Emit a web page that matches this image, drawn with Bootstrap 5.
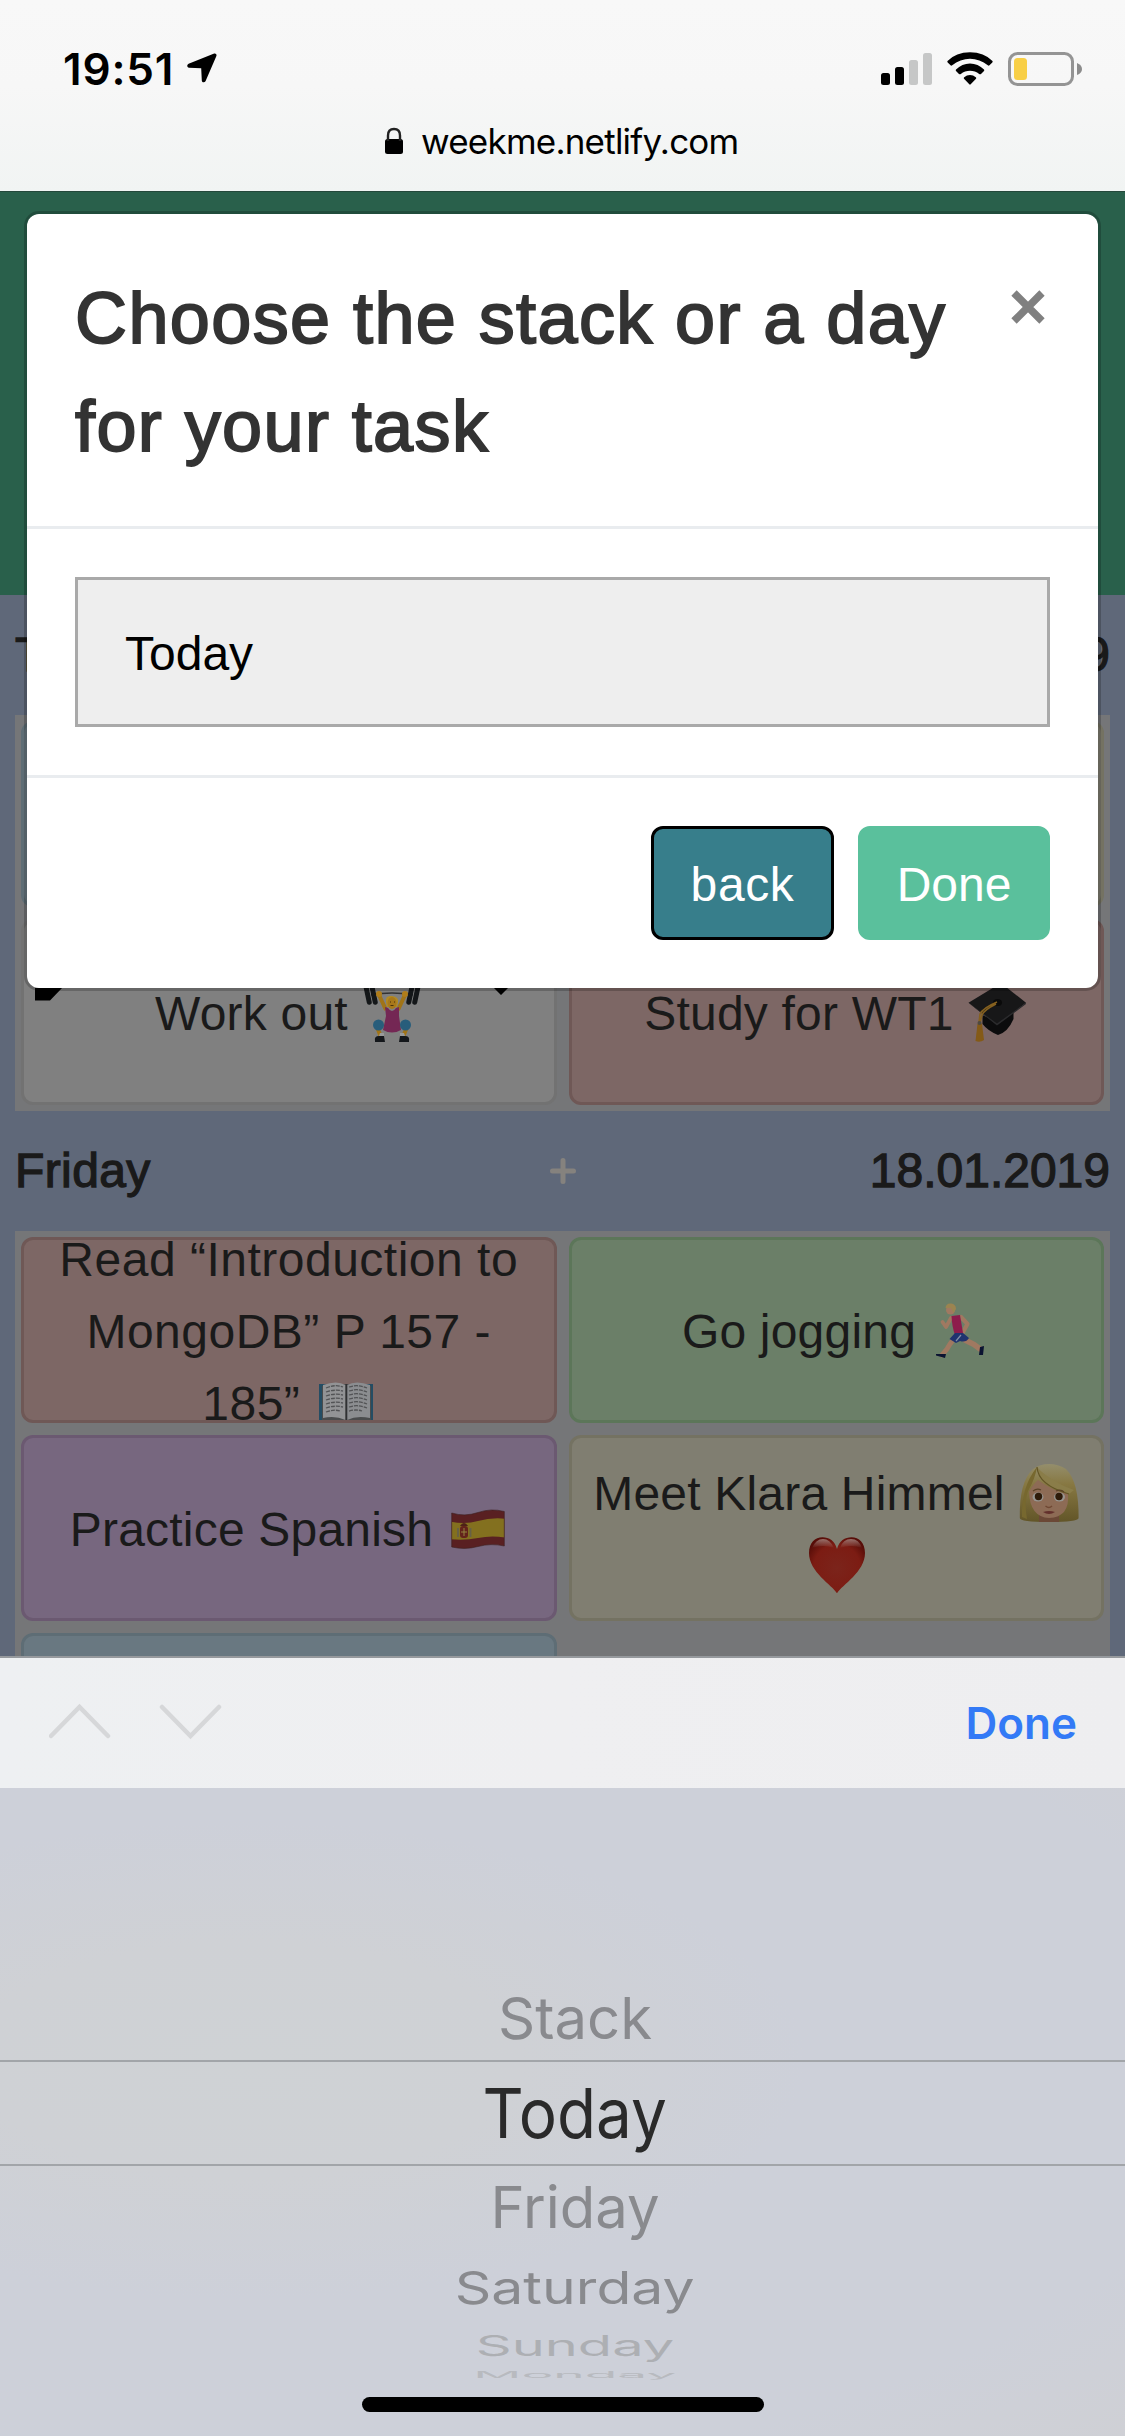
<!DOCTYPE html>
<html lang="en">
<head>
<meta charset="utf-8">
<meta name="viewport" content="width=device-width, initial-scale=1">
<title>weekme</title>
<link href="https://cdn.jsdelivr.net/npm/bootstrap@5.3.0/dist/css/bootstrap.min.css" rel="stylesheet">
<style>
  body { width:1125px; height:2436px; overflow:hidden; font-family:"Liberation Sans",Arial,sans-serif; font-size:48px; line-height:72px; color:#1a1a1a; }
  .ios { font-family:Inter,"Liberation Sans",sans-serif; color:#000; }
  .safari-top { height:192px; background:linear-gradient(#f8f8f8 0,#f7f7f7 45%,#f1f4f3 100%); border-bottom:1px solid #24483b; }
  .status-row { height:100px; padding:37px 43px 0 63px; line-height:64px; }
  .clock { font-size:44px; font-weight:600; letter-spacing:.85px; }
  .loc { margin:16px 0 0 13px; }
  .signals { margin-top:14px; }
  .url-row { padding-top:14px; padding-left:384px; line-height:54px; font-size:35px; letter-spacing:-.78px; }
  .url-row svg { margin-right:17px; margin-top:-1px; }
  .webview { height:1464px; background:#5f6879; }
  .hero { height:403px; background:#29604b; }
  .day-head { height:120px; padding:0 15px; }
  .mid { font-weight:400; -webkit-text-stroke:1.3px currentColor; }
  .day-head > .mid { flex:1 1 0; }
  .day-name { letter-spacing:.4px; }
  .tasks { margin:0 15px; padding:0; background:#757678; }
  .tasks > div { padding:6px; }
  .task { height:186px; border:3px solid; border-radius:12px; overflow:hidden; padding:3px 18px 0; text-align:center; letter-spacing:.2px; }
  .task svg { width:60px; height:60px; vertical-align:-12px; margin-left:1px; }
  .spaced { letter-spacing:.5px; }
  .t-blue { background:#697881; border-color:#5e6d75; }
  .t-sand { background:#807e71; border-color:#747262; }
  .t-grey { background:#808080; border-color:#727272; }
  .t-pink { background:#7d6765; border-color:#6f5856; }
  .t-green { background:#6b7f68; border-color:#5c7659; }
  .t-plum { background:#77677f; border-color:#6b5971; }
  .dlg { top:19px; left:24px; width:1077px; border:3px solid rgba(0,0,0,.2); border-radius:15px; background:#fff; background-clip:padding-box; }
  .dlg-head { padding:50px 48px 46px; height:315px; border-bottom:3px solid #e9ecef; color:#333; }
  .dlg-title { font-size:72px; line-height:108px; letter-spacing:1.4px; -webkit-text-stroke-width:1.9px; margin:0; white-space:nowrap; }
  .dlg-close { margin:25px 4px 0 0; }
  .dlg-body { padding:48px; height:249px; border-bottom:3px solid #e9ecef; }
  .day-select { height:150px; border:3px solid #a9a9a9; background:#eee; color:#000; padding:3px 0 0 47px; }
  .dlg-foot { padding:48px; height:210px; gap:24px; }
  .bt { height:114px; border-radius:12px; color:#fff; border:3px solid; padding:3px 0 0; }
  .bt-back { width:183px; background:#377e8b; border-color:#000; letter-spacing:.6px; }
  .bt-done { width:192px; background:#5ac09c; border-color:#5ac09c; }
  .cut { top:796px; left:35px; }
  .kb-bar { height:132px; background:linear-gradient(90deg,#eef0f2,#efeff1 50%,#eeeef0); border-top:2px solid #96999d; padding:0 48px; }
  .kb-bar svg { margin:-6px 0 0 1px; }
  .kb-done { font-size:44px; font-weight:600; color:#337af6; letter-spacing:0; }
  .kb-wheel { height:648px; background:radial-gradient(ellipse at 22% 42%,#cfd2d5 0,#cfd1d5 22%,#cdd0d9 45%,#cdd0d9 80%,#cfd0d5 100%); padding-top:189px; padding-left:25px; }
  .wheel-row { white-space:nowrap; color:#898a8e; height:83px; line-height:83px; font-size:58px; }
  .wheel-row span { display:inline-block; }
  .wheel-sel { height:106px; line-height:103px; font-size:69px; border-top:2px solid #a2a5a9; border-bottom:2px solid #a2a5a9; color:#2a2a2a; margin-left:-25px; padding-left:25px; }
  .wheel-sel span { transform:scale(.925,1); }
  .turn-1 { height:76px; line-height:78px; font-size:56px; }
  .turn-1 span { transform:scale(1.02,.8); }
  .turn-2 { height:42px; line-height:42px; font-size:56px; color:#adafb3; }
  .turn-2 span { transform:scale(1,.5); }
  .turn-3 { height:20px; line-height:16px; font-size:56px; color:#b8babf; }
  .turn-3 span { transform:scale(.95,.15); }
  .home-bar { width:402px; height:15px; border-radius:8px; background:#000; left:362px; bottom:24px; }
</style>
<script src="https://cdn.jsdelivr.net/npm/bootstrap@5.3.0/dist/js/bootstrap.bundle.min.js"></script>
</head>
<body>
<div class="d-flex flex-column position-relative">

  <header class="safari-top ios">
    <div class="status-row d-flex">
      <span class="clock">19:51</span>
      <svg class="loc" width="30" height="30" viewBox="0 0 30 30"><path d="M27.2.6 1.6 10.8C-.4 11.7-.1 14.6 2 14.8L14.2 15.3 14.8 27.4C14.9 29.6 17.6 29.9 18.5 28.2L29.4 3C29.9 1.4 28.7.1 27.2.6Z"/></svg>
      <svg class="signals ms-auto" width="202" height="36" viewBox="0 0 202 36">
        <rect x="1" y="22" width="9" height="12" rx="2.5"/><rect x="15" y="16" width="9" height="18" rx="2.5"/>
        <rect x="29" y="9" width="9" height="25" rx="2.5" fill="#c6c7c7"/><rect x="43" y="2" width="9" height="32" rx="2.5" fill="#c6c7c7"/>
        <path d="M67.5 10Q76 1.2 90 1.2T112.500 10Q113 10.800 112.300 11.500L109.500 14.300Q108.600 15 107.800 14.300C97.500 5.600 82.500 5.600 72.200 14.300Q71.300 15 70.500 14.300L67.700 11.500Q67 10.800 67.500 10Z"/>
        <path d="M76 18.500Q82 12.500 90 12.500T104 18.500Q104.600 19.200 104 20L101 23Q100 23.700 99.200 23C94 18.700 86 18.700 80.800 23Q80 23.700 79 23L76 20Q75.400 19.200 76 18.500Z"/>
        <path d="M84.200 26.300Q86.800 24 90 24T95.800 26.300Q96.700 27 96 27.800L90.700 33.300Q90 34 89.300 33.300L84 27.800Q83.300 27 84.200 26.300Z"/>
        <rect x="129.500" y="2.500" width="63" height="31" rx="8" fill="none" stroke="#949494" stroke-width="3"/>
        <rect x="134" y="7" width="13" height="22" rx="3.500" fill="#f8cf46"/>
        <path d="M197 12Q202 14 202 18T197 24Z" fill="#8c8c8c"/>
      </svg>
    </div>
    <div class="url-row d-flex align-items-center">
      <svg width="20" height="28" viewBox="0 0 20 28"><rect x="1" y="12" width="18" height="15" rx="2.500"/><path d="M4 14V8.500Q4 2 10 2T16 8.500V14" fill="none" stroke="#222" stroke-width="2.400"/></svg>
      <span>weekme.netlify.com</span>
    </div>
  </header>

  <main class="webview position-relative overflow-hidden">
    <div class="hero"></div>

    <section>
      <div class="day-head d-flex align-items-center"><span class="mid day-name">Today</span><span class="mid text-end">17.01.2019</span></div>
      <div class="tasks row g-0">
        <div class="col-6"><div class="task t-blue"></div></div>
        <div class="col-6"><div class="task t-sand"></div></div>
        <div class="col-6"><div class="task t-grey d-flex align-items-center justify-content-center"><div>Work out
          <svg viewBox="0 0 60 60"><path d="M9 13Q30 9 51 13" fill="none" stroke="#333" stroke-width="1.500"/><g fill="#141719"><rect x="3" y="2" width="5" height="21" rx="2.500" transform="rotate(-12 5 12)"/><rect x="9" y="0" width="5" height="23" rx="2.500" transform="rotate(-12 11 12)"/><rect x="46" y="0" width="5" height="23" rx="2.500" transform="rotate(12 49 12)"/><rect x="52" y="2" width="5" height="21" rx="2.500" transform="rotate(12 55 12)"/></g><path d="M17 13 24 28M43 13 36 28" stroke="#a17417" stroke-width="4"/><circle cx="17" cy="12" r="3" fill="#b07d19"/><circle cx="43" cy="12" r="3" fill="#b07d19"/><path d="M24 20Q23 13 30 14T36 20L35 25H25Z" fill="#b28a22"/><ellipse cx="30" cy="21" rx="4.500" ry="6" fill="#a8781a"/><path d="M28 20h1M32 20h1M28.500 23.500h3" stroke="#49310d"/><path d="M23 25 26 26Q30 32 34 26L37 25 37 34 39 48Q30 53 21 48L24 34Z" fill="#742754"/><path d="M15 45 19 55M45 45 41 55" stroke="#a17417" stroke-width="4"/><circle cx="16.500" cy="43" r="5.500" fill="#285d7b"/><circle cx="43.500" cy="43" r="5.500" fill="#285d7b"/><path d="M18 51h4v3h-5ZM38 51h4l1 3h-5Z" fill="#999"/><path d="M13 59Q12 54 17 54L22 54 23 60H13ZM37 60 38 54 43 54Q48 54 47 59V60Z" fill="#14171b"/></svg></div></div></div>
        <div class="col-6"><div class="task t-pink d-flex align-items-center justify-content-center"><div>Study for WT1
          <svg viewBox="0 0 60 60"><path d="M14.500 33V42Q20 49 30 53 40 50 45.500 37V27L29 40Z" fill="#0c0c0d"/><path d="M.5 20.700 33 1 58 20.700 29 43.300Z" fill="#171718"/><path d="M.5 20.700 29 41.500 58 20.700V22L29 43.600Z" fill="#2b2b2d"/><ellipse cx="29.500" cy="20.500" rx="4.500" ry="3.500" fill="#0a0a0a"/><path d="M29 20Q15 26 12 32L11 41M28 22Q16 28 14 33L12 41" fill="none" stroke="#85601f" stroke-width="1.600"/><path d="M9.500 42Q12 39 14 42L16 58Q12 61 7.500 59Z" fill="#845a17"/><circle cx="11.500" cy="41" r="2" fill="#4f4a40"/></svg></div></div></div>
      </div>
    </section>

    <section>
      <div class="day-head d-flex align-items-center"><span class="mid day-name">Friday</span>
        <svg width="26" height="26" viewBox="0 0 26 26"><path d="M13 2.500V23.500M2.500 13H23.500" stroke="#85827e" stroke-width="5" stroke-linecap="round"/></svg>
        <span class="mid text-end">18.01.2019</span></div>
      <div class="tasks row g-0">
        <div class="col-6"><div class="task t-pink d-flex align-items-center justify-content-center"><div class="text-nowrap spaced">Read “Introduction to<br>MongoDB” P 157 -<br>185”
          <svg viewBox="0 0 60 60"><path d="M4 12H58V52H4Z" fill="#244d64"/><path d="M7 14 29 12H33L56 14V48H7Z" fill="#4a4c4d"/><path d="M8 13Q22 8 30.500 13V48Q20 43 8 46Z" fill="#929395"/><path d="M32 13Q41 8 55 13V46Q42 43 32 48Z" fill="#8b8d90"/><path d="M30.500 12h1.800V49h-1.800Z" fill="#303133"/><path d="M11 16Q20 12 28 15M11 20Q20 17 28 19M11 24Q20 21 28 23M11 28Q20 25 28 27M11 32Q20 29 28 31M11 36Q20 33 28 35M11 40Q19 37 25 39M34 15Q43 12 52 16M34 19Q43 16 52 20M34 23Q43 20 52 24M34 27Q43 24 52 28M34 31Q43 28 52 32M34 35Q43 32 52 36M34 39Q41 37 47 39" fill="none" stroke="#525355" stroke-width="1.300" stroke-dasharray="4 1"/></svg></div></div></div>
        <div class="col-6"><div class="task t-green d-flex align-items-center justify-content-center"><div>Go jogging
          <svg viewBox="0 0 60 60"><g fill="none" stroke="#a07961" stroke-linecap="round" stroke-linejoin="round"><path d="M20 18 15 27 11.500 22" stroke-width="3.800"/><path d="M30 17 36.500 24 31.500 33" stroke-width="4.200"/><path d="M22 40Q18 45 16 49L11 55" stroke-width="5"/><path d="M34 40 43 44.500 49 49" stroke-width="5.500"/></g><circle cx="19.500" cy="10" r="4.500" fill="#a07961"/><path d="M14.500 8Q15 3 20 3.500T25 9L22.500 13 20 8Z" fill="#9b8450"/><path d="M20.500 16 29 15 32 33 24 35Q21 27 20.500 16Z" fill="#8d1c4c"/><path d="M24 33 32 33 38 38Q35 43 29 41L25 43 18.500 39Z" fill="#20336f"/><path d="M25 41 30 35" stroke="#8290a7" stroke-width="1.200"/><path d="M5 54 15 54 14 58 5 55.500ZM49 47 53 46 52 55 48 55Z" fill="#0b1331"/></svg></div></div></div>
        <div class="col-6"><div class="task t-plum d-flex align-items-center justify-content-center"><div>Practice Spanish
          <svg viewBox="0 0 60 60"><defs><clipPath id="wave"><path d="M3.700 15Q17 19 30 14.500T56.300 13.500V48Q43 45 30 48.500T3.700 49Z"/></clipPath></defs><g clip-path="url(#wave)"><path d="M0 5H60V55H0Z" fill="#592022"/><path d="M0 23Q16 27 30 23T60 21V40Q44 37 30 40T0 41Z" fill="#83701f"/></g><path d="M3.700 15Q17 19 30 14.500T56.300 13.500V48Q43 45 30 48.500T3.700 49Z" fill="none" stroke="#3d2020" stroke-width=".6"/><rect x="12" y="28" width="8" height="12" rx="3" fill="#63231b"/><path d="M12 28Q16 22 20 28Z" fill="#4e2217"/><path d="M16 30v8M13 34h6" stroke="#93823f"/><path d="M10 30v9M22.500 30v9" stroke="#676147" stroke-width="1.800"/></svg></div></div></div>
        <div class="col-6"><div class="task t-sand d-flex align-items-center justify-content-center"><div class="text-nowrap">Meet Klara Himmel
          <svg viewBox="0 0 60 60"><defs><linearGradient id="hair" x2="0" y2="1"><stop stop-color="#948e6c"/><stop offset=".35" stop-color="#877842"/><stop offset="1" stop-color="#625528"/></linearGradient></defs><path d="M.8 56Q0 20 14 7 21 2 30 2T47 7Q60 20 59.600 56 59 60 30 60T.8 56Z" fill="url(#hair)"/><path d="M20 49H40V60H20Z" fill="#6b4836"/><path d="M10 30Q14 22 19 18 34 29 49 32 51 55 30 56 11 55 10 30Z" fill="#8d6b55"/><path d="M18 5Q16 17 9 29 5 40 8 57L3 55Q2 25 18 5Z" fill="#77682f"/><path d="M18 5Q19 23 50 32L55 28Q41 23 31 16 22 10 18 5Z" fill="#8a7d49"/><path d="M18 5Q19 23 50 32" fill="none" stroke="#635526" stroke-width="1.200"/><ellipse cx="19" cy="35" rx="5.500" ry="4.500" fill="#989590"/><ellipse cx="40.500" cy="35" rx="5.500" ry="4.500" fill="#989590"/><circle cx="19.500" cy="34.500" r="3.700" fill="#2e1b0a"/><circle cx="40" cy="34.500" r="3.700" fill="#2e1b0a"/><path d="M14 29Q18 26 22 28M37 29Q42 27 45 30" fill="none" stroke="#5b4327" stroke-width="1.200"/><path d="M26.500 44Q30 47 33 44" fill="none" stroke="#704833" stroke-width="1.500"/><path d="M24 50Q30 48 36 50 30 54 24 50Z" fill="#63302c"/></svg><br><svg viewBox="0 0 60 60"><defs><radialGradient id="hrt" cx=".5" cy=".55" r=".6"><stop stop-color="#7b241b"/><stop offset=".7" stop-color="#7c1c13"/><stop offset="1" stop-color="#570d08"/></radialGradient><linearGradient id="shine" x2="0" y2="1"><stop stop-color="#a98a84" stop-opacity=".8"/><stop offset="1" stop-color="#a98a84" stop-opacity="0"/></linearGradient></defs><path d="M30 59.300C25 51 2 38 2 19 2 9 8 3.300 15.500 3.300 22 3.300 28 7 30 15 32 7 38 3.300 44.500 3.300 52 3.300 58 9 58 19 58 38 35 51 30 59.300Z" fill="url(#hrt)"/><path d="M5 14Q9 5 16 5T27 14Q16 10 5 14ZM33 14Q36 5 44 5T55 14Q44 10 33 14Z" fill="url(#shine)"/></svg></div></div></div>
        <div class="col-6"><div class="task t-blue"></div></div>
      </div>
    </section>

    <svg class="cut position-absolute" width="480" height="14" viewBox="0 0 480 14"><path d="M0 0H27L15 12.500H0ZM459 0H473L466 7Z"/></svg>

    <div class="dlg position-absolute" role="dialog">
      <div class="dlg-head d-flex justify-content-between">
        <h5 class="dlg-title mid">Choose the stack or a day<br>for your task</h5>
        <svg class="dlg-close" width="36" height="36" viewBox="0 0 36 36"><path d="M4 4 32 32M32 4 4 32" stroke="#808080" stroke-width="7.500"/></svg>
      </div>
      <div class="dlg-body"><div class="day-select d-flex align-items-center">Today</div></div>
      <div class="dlg-foot d-flex justify-content-end">
        <button class="bt bt-back" type="button">back</button>
        <button class="bt bt-done" type="button">Done</button>
      </div>
    </div>
  </main>

  <footer class="ios">
    <div class="kb-bar d-flex align-items-center">
      <svg width="176" height="40" viewBox="0 0 176 40"><path d="M2 36 30.500 7 59 36M113 7 141.500 36 170 7" fill="none" stroke="#d6d7d9" stroke-width="4.500" stroke-linecap="round"/></svg>
      <span class="kb-done ms-auto">Done</span>
    </div>
    <div class="kb-wheel text-center overflow-hidden">
      <div class="wheel-row"><span>Stack</span></div>
      <div class="wheel-row wheel-sel"><span>Today</span></div>
      <div class="wheel-row"><span>Friday</span></div>
      <div class="wheel-row turn-1"><span>Saturday</span></div>
      <div class="wheel-row turn-2"><span>Sunday</span></div>
      <div class="wheel-row turn-3"><span>Monday</span></div>
    </div>
  </footer>
  <div class="home-bar position-absolute"></div>
</div>
</body>
</html>
